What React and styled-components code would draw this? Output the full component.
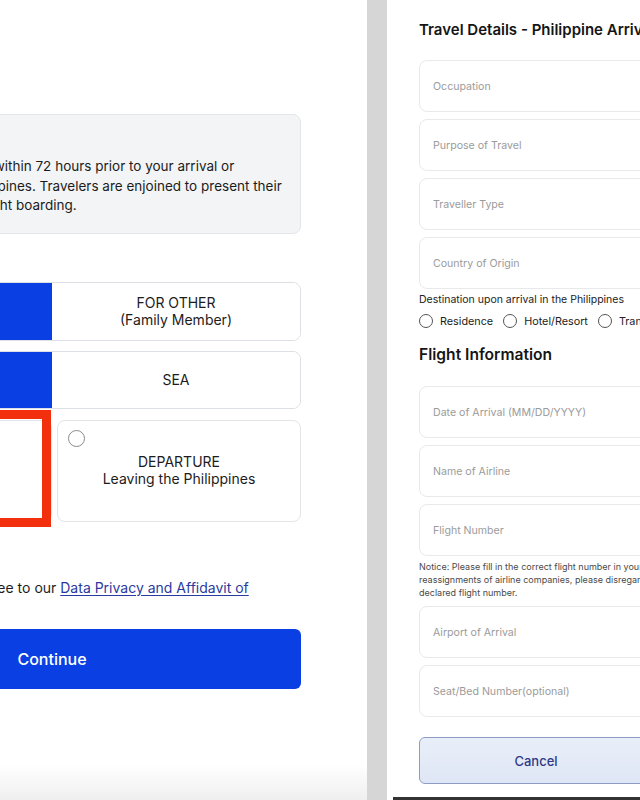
import styled, { createGlobalStyle } from "styled-components"

const GlobalStyle = createGlobalStyle`
    html, body {
        margin: 0;
        padding: 0;
        background: #ffffff;
    }
    * {
        box-sizing: border-box;
    }
`

const infoLines = [
    'All travellers must register within 72 hours prior to your arrival or',
    'departures out of the Philippines. Travelers are enjoined to present their',
    'issued QR codes during flight boarding.',
]

const travelFields = ['Occupation', 'Purpose of Travel', 'Traveller Type', 'Country of Origin']
const flightFields = ['Date of Arrival (MM/DD/YYYY)', 'Name of Airline', 'Flight Number']
const destinations = ['Residence', 'Hotel/Resort', 'Transit']

export default function App() {
    return (
        <Page>
            <GlobalStyle />
            <LeftPanel>
                <InfoBox>
                    <InfoTitle>Reminder</InfoTitle>
                    {infoLines.map((line) => (
                        <InfoLine key={line}>{line}</InfoLine>
                    ))}
                </InfoBox>

                <SectionLabel>Registering for</SectionLabel>
                <SegmentRow>
                    <Segment $active>FOR MYSELF</Segment>
                    <Segment>FOR OTHER<br />(Family Member)</Segment>
                </SegmentRow>
                <SegmentRow $short>
                    <Segment $active>AIR</Segment>
                    <Segment>SEA</Segment>
                </SegmentRow>

                <CardRow>
                    <TripCard $marked>
                        <Radio />
                    </TripCard>
                    <TripCard>
                        <Radio />
                        <CardText>DEPARTURE<br />Leaving the Philippines</CardText>
                    </TripCard>
                </CardRow>

                <Terms>
                    <Check />
                    <span>By clicking Continue, I agree to our <TermsLink href="#">Data Privacy and Affidavit of Undertaking</TermsLink></span>
                </Terms>

                <ContinueButton>Continue</ContinueButton>
            </LeftPanel>

            <Divider />

            <RightPanel>
                <FormTitle>Travel Details - Philippine Arrival</FormTitle>
                {travelFields.map((f) => (
                    <Field key={f} placeholder={f} />
                ))}
                <SmallLabel>Destination upon arrival in the Philippines</SmallLabel>
                <RadioGroup>
                    {destinations.map((d) => (
                        <RadioOption key={d}>
                            <SmallRadio />
                            {d}
                        </RadioOption>
                    ))}
                </RadioGroup>

                <FormHeading>Flight Information</FormHeading>
                {flightFields.map((f) => (
                    <Field key={f} placeholder={f} />
                ))}
                <Notice>
                    <span>Notice: Please fill in the correct flight number in your ticket. In case of flight</span>
                    <span>reassignments of airline companies, please disregard the QR code and the previously</span>
                    <span>declared flight number.</span>
                </Notice>
                <Field $gap placeholder="Airport of Arrival" />
                <Field placeholder="Seat/Bed Number(optional)" />

                <ButtonRow>
                    <CancelButton>Cancel</CancelButton>
                    <SubmitButton>Submit</SubmitButton>
                </ButtonRow>
                <BottomEdge />
            </RightPanel>
        </Page>
    );
}

const Page = styled.div`
    display: flex;
    width: 640px;
    height: 800px;
    overflow: hidden;
    background: #ffffff;
    font-family: Inter, "Noto Sans", sans-serif;
    color: #1c1c1c;
`

const LeftPanel = styled.section`
    flex: 0 0 587px;
    min-width: 0;
    margin-left: -220px;
    padding: 114px 66px 0 23px;
    display: flex;
    flex-direction: column;
    background: linear-gradient(to bottom, #ffffff 0, #ffffff 765px, #efefef 800px);
`

const InfoBox = styled.div`
    background: #f2f4f6;
    border: 1px solid #e3e6ea;
    border-radius: 8px;
    padding: 13px 20px 17px;
`

const InfoTitle = styled.div`
    font-size: 15px;
    font-weight: 600;
    line-height: 24px;
    margin-bottom: 5px;
`

const InfoLine = styled.span`
    display: block;
    white-space: nowrap;
    font-size: 13.5px;
    line-height: 19.5px;
`

const SectionLabel = styled.div`
    font-size: 14px;
    font-weight: 600;
    line-height: 18px;
    margin: 21px 0 9px;
`

const SegmentRow = styled.div`
    display: grid;
    grid-template-columns: 1fr 1fr;
    height: ${(p) => (p.$short ? '58px' : '59px')};
    margin-bottom: ${(p) => (p.$short ? '11px' : '10px')};
    border: 1px solid #dcdfe4;
    border-radius: 8px;
    overflow: hidden;
`

const Segment = styled.div`
    display: flex;
    align-items: center;
    justify-content: center;
    text-align: center;
    font-size: 14px;
    line-height: 17px;
    background: ${(p) => (p.$active ? '#0a3fe4' : '#ffffff')};
    color: ${(p) => (p.$active ? '#ffffff' : '#1c1c1c')};
`

const CardRow = styled.div`
    display: grid;
    grid-template-columns: 249px 1fr;
    gap: 5px;
    height: 102px;
`

const TripCard = styled.div`
    position: relative;
    display: flex;
    flex-direction: column;
    align-items: center;
    padding: 9px 10px;
    border: 1px solid #e2e4e8;
    border-radius: 8px;
    background: #ffffff;

    ${(p) => p.$marked && `
        &::after {
            content: '';
            position: absolute;
            top: -11px;
            bottom: -6px;
            left: -10px;
            right: 0;
            border: 9px solid #f3300e;
        }
    `}
`

const Radio = styled.span`
    align-self: flex-start;
    width: 17px;
    height: 17px;
    border-radius: 50%;
    border: 1.5px solid #8a8a8a;
`

const CardText = styled.div`
    margin-top: 6px;
    text-align: center;
    font-size: 14px;
    line-height: 17px;
`

const Terms = styled.label`
    display: flex;
    align-items: flex-start;
    gap: 4px;
    margin-top: 56px;
    font-size: 14px;
    line-height: 20px;
`

const Check = styled.span`
    width: 18px;
    height: 18px;
    flex: none;
    margin-top: 1px;
    border: 1.5px solid #8a8a8a;
    border-radius: 3px;
`

const TermsLink = styled.a`
    color: #2b3a9e;
    text-decoration: underline;
    text-underline-offset: 2px;
`

const ContinueButton = styled.button`
    margin-top: 11px;
    height: 60px;
    border: none;
    border-radius: 6px;
    background: #0a3fe4;
    color: #ffffff;
    font-family: inherit;
    font-size: 16px;
    font-weight: 500;
`

const Divider = styled.div`
    flex: 0 0 20px;
    background: #d6d6d6;
`

const RightPanel = styled.section`
    flex: 0 0 520px;
    padding: 20px 0 0 32px;
    display: flex;
    flex-direction: column;
`

const FormTitle = styled.h2`
    margin: 0 0 20px;
    font-size: 15px;
    font-weight: 600;
    line-height: 20px;
    white-space: nowrap;
    color: #151515;
`

const Field = styled.input`
    flex: none;
    width: 480px;
    height: 52px;
    margin: ${(p) => (p.$gap ? '7px' : '0')} 0 7px;
    padding: 0 13px;
    border: 1px solid #e8e9eb;
    border-radius: 8px;
    font-family: inherit;
    font-size: 10.6px;
    background: #ffffff;

    &::placeholder {
        color: #9b9b9b;
    }
`

const SmallLabel = styled.div`
    margin-top: -3px;
    font-size: 10.5px;
    line-height: 14px;
    color: #222222;
`

const RadioGroup = styled.div`
    display: flex;
    gap: 10px;
    margin-top: 6px;
    height: 16px;
    white-space: nowrap;
`

const RadioOption = styled.label`
    display: flex;
    align-items: center;
    gap: 7px;
    font-size: 10.8px;
    color: #222222;
`

const SmallRadio = styled.span`
    width: 14px;
    height: 14px;
    border-radius: 50%;
    border: 1.3px solid #555555;
`

const FormHeading = styled.h3`
    margin: 16px 0 21px;
    font-size: 15.6px;
    font-weight: 600;
    line-height: 20px;
    color: #151515;
`

const Notice = styled.div`
    display: flex;
    flex-direction: column;
    margin-top: -3px;
    font-size: 9px;
    line-height: 13px;
    color: #4a4a4a;
    white-space: nowrap;
`

const ButtonRow = styled.div`
    display: flex;
    gap: 12px;
    margin-top: 13px;
`

const CancelButton = styled.button`
    width: 234px;
    height: 47px;
    border: 1px solid #8d9cc4;
    border-radius: 6px;
    background: linear-gradient(to bottom, #e9eff9, #dfe6f5);
    color: #2e3a87;
    font-family: inherit;
    font-size: 13px;
    font-weight: 500;
`

const SubmitButton = styled(CancelButton)`
    background: #0a3fe4;
    border-color: #0a3fe4;
    color: #ffffff;
`

const BottomEdge = styled.div`
    margin: 13px 0 0 -26px;
    height: 3px;
    background: #333333;
`
